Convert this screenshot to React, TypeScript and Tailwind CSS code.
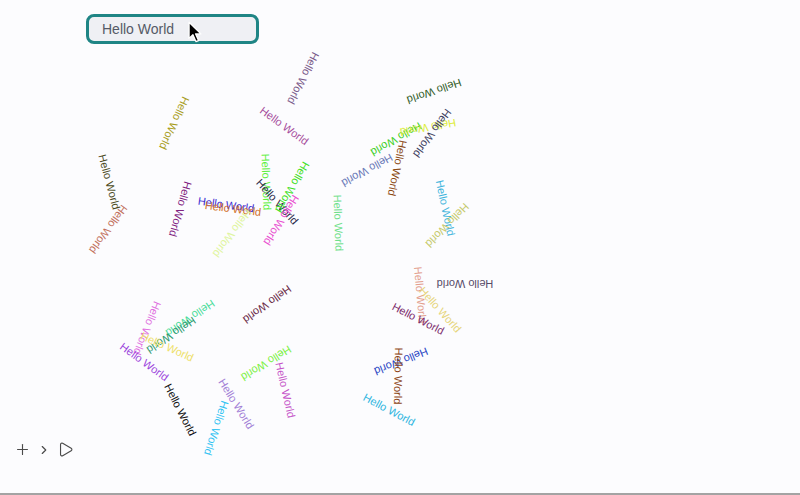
import { Plus, ChevronRight, Play } from "lucide-react";

type Word = { x: number; y: number; r: number; c: string };

// centre point, rotation (deg, clockwise) and colour of each label on the canvas
const words: Word[] = [
  { x: 303, y: 78, r: 117, c: "#7a5a8a" },
  { x: 284, y: 126, r: 36, c: "#a64d9c" },
  { x: 174, y: 123, r: 115, c: "#a89d1a" },
  { x: 109, y: 182, r: 75, c: "#4b4a1c" },
  { x: 108, y: 229, r: 126, c: "#c2705c" },
  { x: 180, y: 209, r: 106, c: "#80207f" },
  { x: 226, y: 205, r: 8, c: "#3a2ad0" },
  { x: 233, y: 209, r: 7, c: "#d0702a" },
  { x: 232, y: 233, r: 127, c: "#dff5a0" },
  { x: 266, y: 182, r: 88, c: "#5cf03c" },
  { x: 277, y: 202, r: 48, c: "#2a2a4a" },
  { x: 292, y: 187, r: 120, c: "#3fe024" },
  { x: 281, y: 220, r: 122, c: "#e94ed0" },
  { x: 338, y: 223, r: 88, c: "#6ee08a" },
  { x: 367, y: 170, r: 151, c: "#6b7ab8" },
  { x: 396, y: 139, r: 150, c: "#3ccf1e" },
  { x: 428, y: 127, r: 170, c: "#dcec3a" },
  { x: 432, y: 133, r: 126, c: "#3d4060" },
  { x: 434, y: 91, r: 161, c: "#2f5b1f" },
  { x: 397, y: 168, r: 102, c: "#8b4a14" },
  { x: 445, y: 208, r: 78, c: "#40b4dc" },
  { x: 447, y: 225, r: 134, c: "#c5c96a" },
  { x: 465, y: 283, r: 180, c: "#574a68" },
  { x: 420, y: 295, r: 85, c: "#e39f8e" },
  { x: 440, y: 310, r: 48, c: "#e6d57a" },
  { x: 418, y: 319, r: 27, c: "#7d2c6d" },
  { x: 401, y: 361, r: 158, c: "#2b47c4" },
  { x: 398, y: 376, r: 91, c: "#8c4516" },
  { x: 389, y: 410, r: 28, c: "#2fb6de" },
  { x: 267, y: 304, r: 144, c: "#6b2b48" },
  { x: 147, y: 328, r: 112, c: "#e06fe0" },
  { x: 190, y: 318, r: 146, c: "#4cdc9c" },
  { x: 171, y: 335, r: 146, c: "#2f9a70" },
  { x: 167, y: 347, r: 24, c: "#eee06a" },
  { x: 144, y: 362, r: 36, c: "#9b44dc" },
  { x: 180, y: 410, r: 63, c: "#111111" },
  { x: 216, y: 428, r: 108, c: "#33c3f2" },
  { x: 236, y: 404, r: 58, c: "#a27fd6" },
  { x: 266, y: 363, r: 148, c: "#7bf043" },
  { x: 285, y: 390, r: 77, c: "#c553c8" },
];

function Cursor() {
  return (
    <svg width="15" height="23" viewBox="0 0 14 21" className="absolute left-[99px] top-[4px]">
      <path
        d="M1 1 L1 16 L4.6 12.6 L7.4 19 L9.8 18 L7.1 11.8 L12 11.8 Z"
        fill="#000"
        stroke="#fff"
        strokeWidth="1.2"
        strokeLinejoin="round"
      />
    </svg>
  );
}

export default function App() {
  return (
    <div className="relative flex h-[495px] w-[800px] flex-col justify-between overflow-hidden border-b-2 border-[#a3a3a3] bg-[#fcfcfe] font-['Liberation_Sans',Arial,sans-serif]">
      <div className="pl-[86px] pt-[14px]">
        <div className="relative flex h-[30px] w-[173px] items-center rounded-[8px] border-[3px] border-[#1f8585] bg-[#eff0f4] pl-[13px] text-[14px] text-[#555a66]">
          Hello World
          <Cursor />
        </div>
      </div>

      <div className="pointer-events-none absolute inset-0">
        {words.map((w, i) => (
          <span
            key={i}
            className="absolute whitespace-nowrap text-[11px] leading-none"
            style={{
              left: w.x,
              top: w.y,
              color: w.c,
              transform: `translate(-50%, -50%) rotate(${w.r}deg)`,
            }}
          >
            Hello World
          </span>
        ))}
      </div>

      <div className="flex items-center gap-[6px] pb-[35px] pl-[14px] text-[#4a4a4a]">
        <Plus size={17} strokeWidth={1.6} />
        <ChevronRight size={14} strokeWidth={2} />
        <Play size={17} strokeWidth={1.6} />
      </div>
    </div>
  );
}
